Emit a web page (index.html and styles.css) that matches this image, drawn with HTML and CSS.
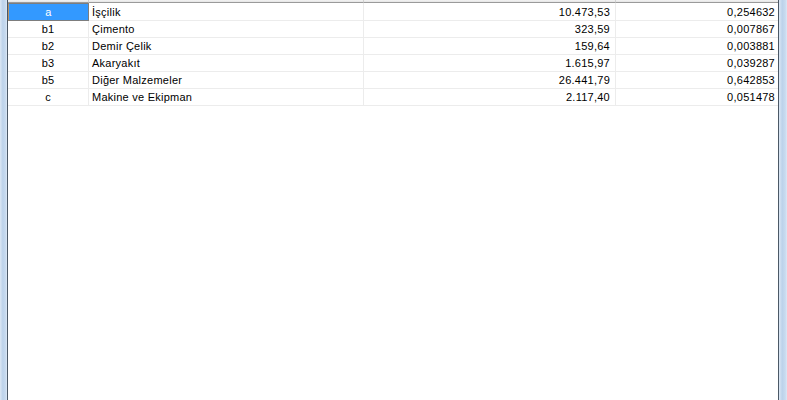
FILE: index.html
```html
<!DOCTYPE html>
<html lang="tr">
<head>
  <meta charset="UTF-8">
  <title>Maliyet Dağılımı</title>
  <link rel="stylesheet" href="styles.css">
</head>
<body>
  <div class="window">
    <div class="frame frame-left"></div>

    <div class="grid-area">
      <table class="grid">
        <colgroup>
          <col class="col-code">
          <col class="col-name">
          <col class="col-amount">
          <col class="col-ratio">
        </colgroup>
        <thead>
          <tr>
            <th></th>
            <th></th>
            <th></th>
            <th></th>
          </tr>
        </thead>
        <tbody>
          <tr>
            <td class="code selected">a</td>
            <td>İşçilik</td>
            <td class="num">10.473,53</td>
            <td class="num">0,254632</td>
          </tr>
          <tr>
            <td class="code">b1</td>
            <td>Çimento</td>
            <td class="num">323,59</td>
            <td class="num">0,007867</td>
          </tr>
          <tr>
            <td class="code">b2</td>
            <td>Demir Çelik</td>
            <td class="num">159,64</td>
            <td class="num">0,003881</td>
          </tr>
          <tr>
            <td class="code">b3</td>
            <td>Akaryakıt</td>
            <td class="num">1.615,97</td>
            <td class="num">0,039287</td>
          </tr>
          <tr>
            <td class="code">b5</td>
            <td>Diğer Malzemeler</td>
            <td class="num">26.441,79</td>
            <td class="num">0,642853</td>
          </tr>
          <tr>
            <td class="code">c</td>
            <td>Makine ve Ekipman</td>
            <td class="num">2.117,40</td>
            <td class="num">0,051478</td>
          </tr>
        </tbody>
      </table>
    </div>

    <div class="frame frame-right"></div>
  </div>
</body>
</html>
```

FILE: styles.css
```css
/* Global Styles */
* {
  margin: 0;
  padding: 0;
  box-sizing: border-box;
}

body {
  font-family: 'Liberation Sans', Arial, sans-serif;
  font-size: 11px;
  letter-spacing: 0.25px;
  color: #000;
  background: #fff;
}

.window {
  display: flex;
  width: 787px;
  height: 400px;
  overflow: hidden;
}

/* Window frame */
.frame {
  background: linear-gradient(90deg, #dce7f4, #bcd2ea 40%, #c9dbef 80%, #dde8f5);
}

.frame-left {
  width: 8px;
  border-right: 1px solid #4b5866;
}

.frame-right {
  width: 9px;
  border-left: 1px solid #4b5866;
}

/* Grid */
.grid-area {
  flex: 1;
  background: #fff;
}

.grid {
  table-layout: fixed;
  border-collapse: separate;
  border-spacing: 0;
  width: 770px;
}

.col-code { width: 81px; }
.col-name { width: 275px; }
.col-amount { width: 252px; }
.col-ratio { width: 162px; }

.grid th {
  height: 3px;
  padding: 0;
  background: linear-gradient(#f3f3f3, #e4e4e4);
  border-right: 1px solid #d0d0d0;
  border-bottom: 1px solid #9a9a9a;
}

.grid td {
  height: 17px;
  padding: 0 3px;
  border-right: 1px solid #ececec;
  border-bottom: 1px solid #ececec;
  white-space: nowrap;
  overflow: hidden;
  line-height: 16px;
}

.grid th:last-child,
.grid td:last-child {
  border-right: none;
}

.grid td.code {
  text-align: center;
}

.grid td.num {
  text-align: right;
  padding-right: 5px;
}

.grid td:last-child.num {
  padding-right: 3px;
}

.grid td.selected {
  background: #3399ff;
  color: #fff;
  border: 1px solid #7d7d7d;
  border-left-color: #b8946a;
}
```
